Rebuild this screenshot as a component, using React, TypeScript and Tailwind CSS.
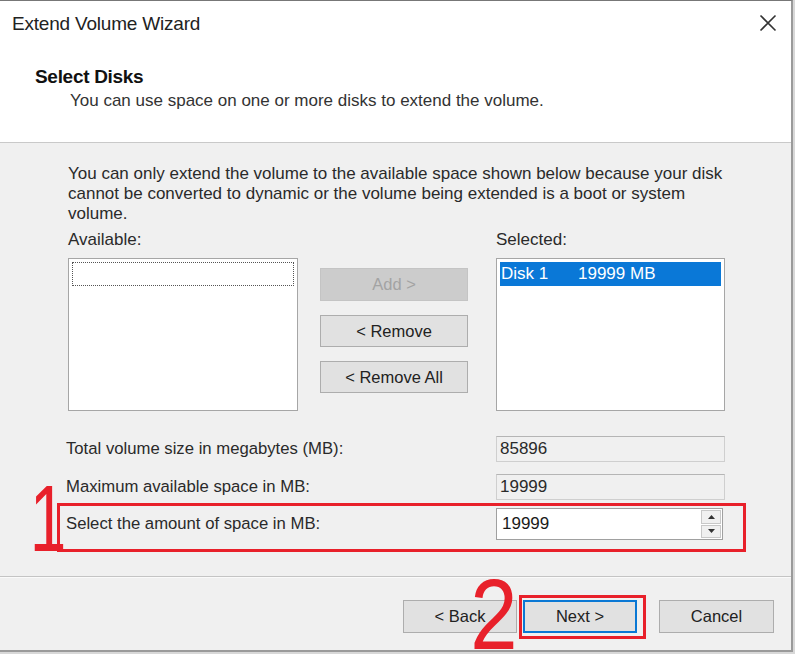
const font = { fontFamily: '"Liberation Sans", Arial, sans-serif' }

function WinButton({ label, disabled, primary, className = '' }: { label: string; disabled?: boolean; primary?: boolean; className?: string }) {
  return (
    <div
      className={`flex items-center justify-center text-[16.5px] ${
        disabled
          ? 'bg-[#cccccc] border border-[#c4c4c4] text-[#a3a3a3]'
          : primary
          ? 'bg-[#e1e1e1] border-2 border-[#0a78d4] text-[#222]'
          : 'bg-[#e1e1e1] border border-[#adadad] text-[#222]'
      } ${className}`}
    >
      {label}
    </div>
  )
}

export default function App() {
  return (
    <div className="w-[795px] h-[654px] bg-[#d8d8d8] overflow-hidden relative" style={font}>
      <div className="w-[793px] h-[652px] flex flex-col bg-[#f0f0f0] border-r-2 border-b-2 border-[#9a9a9a] border-t border-t-[#777]">
        {/* header */}
        <div className="h-[142px] bg-white border-b border-[#c9c9c9] flex flex-col shrink-0">
          <div className="h-[46px] flex items-center justify-between pl-[12px] pr-[16px]">
            <span className="text-[19px] text-[#222] tracking-[-0.2px]">Extend Volume Wizard</span>
            <svg width="18" height="18" viewBox="0 0 18 18" className="mt-[-2px] mr-[-2px]">
              <path d="M1.5 1.5 L16.5 16.5 M16.5 1.5 L1.5 16.5" stroke="#333" strokeWidth="1.6" />
            </svg>
          </div>
          <div className="pl-[35px] mt-[18px] text-[19px] font-bold text-[#111] leading-[24px] tracking-[-0.3px]">Select Disks</div>
          <div className="pl-[70px] mt-[2px] text-[17px] text-[#333] leading-[20px]">
            You can use space on one or more disks to extend the volume.
          </div>
        </div>

        {/* body */}
        <div className="h-[433px] shrink-0 pt-[21px] pl-[68px] flex flex-col text-[#2a2a2a]">
          <p className="text-[17px] leading-[20px] w-[680px]">
            You can only extend the volume to the available space shown below because your disk
            <br />
            cannot be converted to dynamic or the volume being extended is a boot or system
            <br />
            volume.
          </p>
          <div className="flex mt-[6px] h-[20px] text-[17px] leading-[20px]">
            <span className="w-[428px]">Available:</span>
            <span>Selected:</span>
          </div>
          <div className="flex mt-[8px]">
            <div className="w-[230px] h-[153px] bg-white border border-[#a6a6a6] p-[3px]">
              <div className="h-[24px] border border-dotted border-[#555]" />
            </div>
            <div className="w-[148px] ml-[22px] pt-[10px] flex flex-col gap-[14px]">
              <WinButton label="Add >" disabled className="h-[33px]" />
              <WinButton label="< Remove" className="h-[32px]" />
              <WinButton label="< Remove All" className="h-[32px]" />
            </div>
            <div className="w-[229px] h-[153px] ml-[28px] bg-white border border-[#a6a6a6] p-[3px]">
              <div className="h-[24px] bg-[#0a78d7] text-white text-[17px] leading-[24px] pl-[1px] flex">
                <span className="w-[77px]">Disk 1</span>
                <span>19999 MB</span>
              </div>
            </div>
          </div>

          <div className="flex items-center mt-[25px] -ml-[2px]">
            <span className="w-[430px] text-[16.7px]">Total volume size in megabytes (MB):</span>
            <div className="w-[229px] h-[26px] bg-[#f0f0f0] border border-[#cfcfcf] border-t-[#b5b5b5] text-[17px] leading-[24px] pl-[3px]">85896</div>
          </div>
          <div className="flex items-center mt-[12px] -ml-[2px]">
            <span className="w-[430px] text-[16.7px]">Maximum available space in MB:</span>
            <div className="w-[229px] h-[26px] bg-[#f0f0f0] border border-[#cfcfcf] border-t-[#b5b5b5] text-[17px] leading-[24px] pl-[3px]">19999</div>
          </div>
          <div className="flex items-center mt-[8px] -ml-[2px]">
            <span className="w-[430px] text-[16.7px]">Select the amount of space in MB:</span>
            <div className="w-[227px] h-[32px] bg-white border border-[#a0a0a0] flex">
              <span className="flex-1 text-[17px] leading-[30px] pl-[5px] text-[#1a1a1a]">19999</span>
              <div className="w-[22px] flex flex-col gap-[1px] p-[1px]">
                <div className="flex-1 bg-[#f0f0f0] border border-[#c8c8c8] flex items-center justify-center">
                  <svg width="7" height="4" viewBox="0 0 7 4"><path d="M0 4 L3.5 0 L7 4 Z" fill="#333" /></svg>
                </div>
                <div className="flex-1 bg-[#f0f0f0] border border-[#c8c8c8] flex items-center justify-center">
                  <svg width="7" height="4" viewBox="0 0 7 4"><path d="M0 0 L3.5 4 L7 0 Z" fill="#333" /></svg>
                </div>
              </div>
            </div>
          </div>
        </div>

        {/* footer */}
        <div className="flex-1 border-t border-[#c4c4c4] shadow-[inset_0_1px_0_#fafafa] flex items-start pt-[23px] pl-[403px]">
          <WinButton label="< Back" className="w-[114px] h-[33px]" />
          <WinButton label="Next >" primary className="w-[114px] h-[33px] ml-[6px]" />
          <WinButton label="Cancel" className="w-[115px] h-[33px] ml-[22px]" />
        </div>
      </div>

      {/* red annotations */}
      <div className="absolute left-[57px] top-[503px] w-[689px] h-[49px] border-[3px] border-[#e8202a]" />
      <div className="absolute left-[519px] top-[595px] w-[127px] h-[44px] border-[3px] border-[#e8202a]" />
      <div className="absolute left-[22px] top-[472px] text-[#e8202a] text-[94px] leading-none scale-x-[0.7]">1</div>
      <div className="absolute left-[466px] top-[564px] text-[#e8202a] text-[100px] leading-none scale-x-[0.85]">2</div>
    </div>
  )
}
